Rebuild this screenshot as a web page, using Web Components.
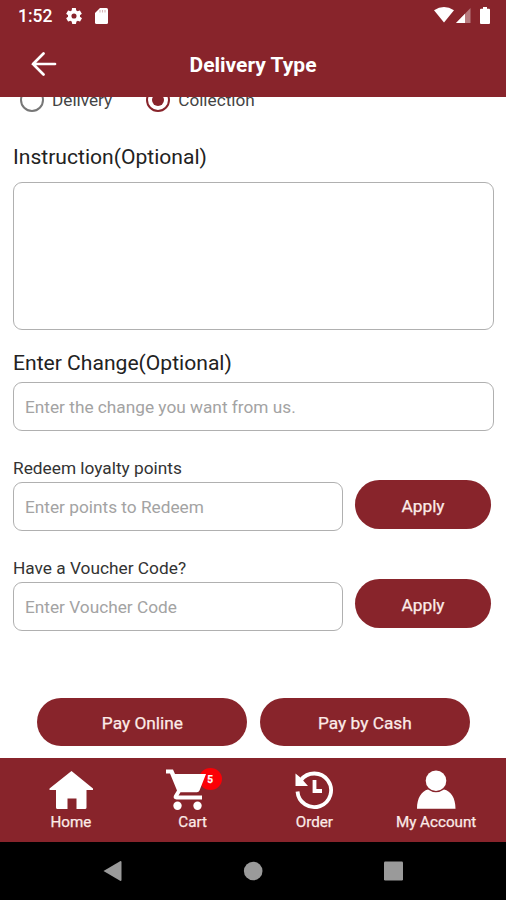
<!DOCTYPE html>
<html lang="en">
<head>
<meta charset="utf-8">
<title>Delivery Type</title>
<style>
html, body {
        margin: 0;
        padding: 0;
}

body {
        --brand: #88242b;
        --line: #b0b0b0;
        background: #fff;
        color: #222;
        font-family: Roboto, "Liberation Sans", sans-serif;
        overflow: hidden;
}
</style>
</head>
<body>
<delivery-screen></delivery-screen>

<script>
const makeTemplate = (html) => {
        const template = document.createElement('template')
        template.innerHTML = html
        return template
}

class BaseElement extends HTMLElement {
        constructor () {
                super()

                const shadowRoot = this.attachShadow({ mode: 'open' })
                shadowRoot.append(this.constructor.template.content.cloneNode(true))
        }
}

// Time, notification icons and signal icons
class StatusBar extends BaseElement {
        static template = makeTemplate(`
<style>
:host {
        align-items: center;
        box-sizing: border-box;
        color: #fff;
        display: flex;
        font-size: 17.5px;
        font-weight: 500;
        height: 32px;
        padding: 0 16px 0 18px;
}

svg {
        display: block;
        fill: #fff;
}

.StatusBar__time {
        line-height: 32px;
        width: 48px;
}

.StatusBar__sd {
        margin-left: 13px;
}

.StatusBar__wifi {
        margin-left: auto;
}

.StatusBar__battery {
        margin-left: 8px;
}

.StatusBar__wifi,
.StatusBar__signal,
.StatusBar__battery {
        margin-top: -2px;
}
</style>
<span class="StatusBar__time">1:52</span>
<svg width="16" height="16" viewBox="2.2 2 19.6 20"><path d="M19.4 13c0-.3.1-.6.1-1s0-.7-.1-1l2.1-1.600c.2-.1.3-.4.1-.6l-2-3.500c-.1-.2-.4-.3-.6-.2l-2.500 1c-.5-.4-1.100-.7-1.700-1l-.4-2.600c0-.3-.2-.5-.5-.5h-4c-.2 0-.4.2-.5.5L9.200 5.100c-.6.3-1.200.6-1.700 1L5 5.100c-.2-.1-.5 0-.6.2l-2 3.500c-.1.2-.1.5.1.6L4.600 11c0 .3-.1.6-.1 1s0 .7.1 1l-2.100 1.600c-.2.1-.2.4-.1.6l2 3.500c.1.2.4.3.6.2l2.500-1c.5.4 1.100.7 1.700 1l.4 2.600c0 .3.2.5.5.5h4c.2 0 .5-.2.5-.5l.4-2.600c.6-.3 1.200-.6 1.700-1l2.500 1c.2.1.5 0 .6-.2l2-3.500c.1-.2.1-.5-.1-.6zM12 15.200a3.200 3.200 0 1 1 0-6.400 3.200 3.200 0 0 1 0 6.400z"/></svg>
<svg class="StatusBar__sd" width="13" height="16" viewBox="0 0 13 16"><path d="M5 0h6.500Q13 0 13 1.500v13q0 1.500-1.500 1.500h-10Q0 16 0 14.500V5z"/><path d="M5 2v2.500M7.500 2v2.500M10 2v2.500" stroke="#88242b" stroke-opacity=".35" stroke-width="1.100"/></svg>
<svg class="StatusBar__wifi" width="20" height="16" viewBox="0 0 20 16"><path d="M0 3.200Q10-3.200 20 3.200L10 15.500z"/></svg>
<svg class="StatusBar__signal" width="18" height="16" viewBox="0 0 18 16"><path d="M2 16 16.500 1v15z" fill-opacity=".4"/><path d="M2 16 11 6.700V16z"/></svg>
<svg class="StatusBar__battery" width="10" height="17" viewBox="0 0 10 17"><path d="M3 0h4v1.800h2q1 0 1 1V16q0 1-1 1H1q-1 0-1-1V2.800q0-1 1-1h2z"/></svg>
`)
}

class AppHeader extends BaseElement {
        static template = makeTemplate(`
<style>
:host {
        background: var(--brand);
        color: #fff;
        display: block;
        height: 97px;
        position: relative;
        z-index: 1;
}

.AppHeader__bar {
        align-items: center;
        display: grid;
        grid-template-columns: 56px 1fr 56px;
        height: 65px;
        padding: 0 15px;
}

.AppHeader__back {
        display: block;
        margin-left: 15px;
}

.AppHeader__title {
        font-size: 21px;
        font-weight: 700;
        line-height: 66px;
        text-align: center;
}
</style>
<status-bar></status-bar>
<div class="AppHeader__bar">
        <svg class="AppHeader__back" width="28" height="26" viewBox="0 0 28 26"><path d="M25 12H3M13.500 1.500 3 12 13.500 22.500" fill="none" stroke="#fff" stroke-linecap="round" stroke-width="2.700"/></svg>
        <span class="AppHeader__title"><slot></slot></span>
</div>
`)
}

class RadioOption extends BaseElement {
        static template = makeTemplate(`
<style>
:host {
        align-items: center;
        color: #444;
        display: flex;
        font-size: 17.2px;
        gap: 8px;
        height: 24px;
        line-height: 24px;
}

.RadioOption__ring {
        border: 2px solid #777;
        border-radius: 50%;
        box-sizing: border-box;
        display: grid;
        height: 24px;
        place-items: center;
        width: 24px;
}

:host([checked]) .RadioOption__ring {
        border-color: var(--brand);
        border-width: 2.5px;
}

:host([checked]) .RadioOption__ring::after {
        background: var(--brand);
        border-radius: 50%;
        content: '';
        height: 12px;
        width: 12px;
}
</style>
<span class="RadioOption__ring"></span>
<span><slot></slot></span>
`)
}

class FormField extends BaseElement {
        static template = makeTemplate(`
<style>
:host {
        display: block;
}

.FormField__label {
        display: block;
        font-size: 21.1px;
        height: 24px;
        line-height: 24px;
        margin-bottom: var(--label-gap, 7px);
}

:host([compact]) .FormField__label {
        color: #333;
        font-size: 17.3px;
        margin-bottom: 2px;
}

.FormField__box {
        background: #fff;
        border: 1px solid var(--line);
        border-radius: 9px;
        box-sizing: border-box;
        color: #222;
        display: block;
        font: 17.25px/24px Roboto, "Liberation Sans", sans-serif;
        height: var(--box-height, 49px);
        outline: none;
        padding: 1px 11px 0;
        resize: none;
        width: 100%;
}

.FormField__box::placeholder {
        color: #a3a3a3;
        opacity: 1;
}
</style>
<label class="FormField__label" for="box"></label>
`)

        connectedCallback () {
                const box = document.createElement(this.hasAttribute('multiline') ? 'textarea' : 'input')

                box.id = 'box'
                box.className = 'FormField__box'
                box.placeholder = this.getAttribute('hint') || ''

                this.shadowRoot.querySelector('label').textContent = this.getAttribute('label')
                this.shadowRoot.append(box)
        }
}

class PillButton extends BaseElement {
        static template = makeTemplate(`
<style>
:host {
        display: block;
}

button {
        -webkit-text-stroke: .25px;
        background: var(--brand);
        border: 0;
        border-radius: 25px;
        color: #fcebe8;
        display: block;
        font: 400 17.3px/48px Roboto, "Liberation Sans", sans-serif;
        height: var(--pill-height, 48px);
        padding: var(--pill-padding, 1px) 0 0;
        width: 100%;
}
</style>
<button type="button"><slot></slot></button>
`)
}

// One entry of the bottom navigation
class TabItem extends BaseElement {
        static template = makeTemplate(`
<style>
:host {
        -webkit-text-stroke: .25px;
        align-items: center;
        color: #fcebe8;
        display: flex;
        flex: 1;
        flex-direction: column;
        font-size: 15.2px;
        line-height: 20px;
}

.TabItem__icon {
        height: 43px;
        margin: 10px 0 1px;
        position: relative;
}
</style>
<div class="TabItem__icon"><slot name="icon"></slot></div>
<span><slot></slot></span>
`)
}

class TabBar extends BaseElement {
        static template = makeTemplate(`
<style>
:host {
        background: var(--brand);
        box-sizing: border-box;
        display: flex;
        height: 84px;
        padding: 0 9px 0 10px;
}

svg {
        display: block;
        fill: #fff;
        height: 43px;
        width: 60px;
}

.TabBar__badge {
        background: #fb0006;
        border-radius: 50%;
        color: #fff;
        font-size: 10px;
        font-weight: 700;
        height: 22px;
        left: 36px;
        line-height: 23px;
        position: absolute;
        text-align: center;
        top: 0;
        width: 23px;
}

.TabBar__cart {
        position: relative;
}
</style>
<tab-item>
        <svg slot="icon" viewBox="0 0 60 43"><path d="M30.500 3 52 20.500V22h-6.500v17.500q0 1.500-1.500 1.500h-8.500V30.500h-9V41H16.500Q15 41 15 39.500V22H8.500v-1.500z"/></svg>
        Home
</tab-item>
<tab-item>
        <span slot="icon" class="TabBar__badge">5</span>
        <svg slot="icon" class="TabBar__cart" viewBox="0 0 60 43"><path d="M3 1.500h7L12 6H43L36.500 22.500q-.7 1.800-2.500 1.800H17.500L15.500 27.500H39V31.500H13.500Q9.500 31 11 27.500L14 22.500 7 5.500H3z"/><circle cx="14.500" cy="37.700" r="4.200"/><circle cx="34.500" cy="37.700" r="4.200"/></svg>
        Cart
</tab-item>
<tab-item>
        <svg slot="icon" viewBox="0 0 60 43"><path d="M17 12A16.800 16.800 0 1 1 13.500 23.500" fill="none" stroke="#fff" stroke-width="3.800"/><path d="M11.500 5.500V18H24L20 13.500 17 10z"/><path d="M30.500 12v11h7.500" fill="none" stroke="#fff" stroke-width="3.800"/></svg>
        Order
</tab-item>
<tab-item>
        <svg slot="icon" viewBox="0 0 60 43"><circle cx="30" cy="12.700" r="10.300"/><path d="M11 40.700C11 30 15.500 23 22 21.500Q30 27 38 21.500C45 23 49.500 30 49.500 40.700z"/></svg>
        My Account
</tab-item>
`)
}

// Android back / home / recents keys
class SystemKeys extends BaseElement {
        static template = makeTemplate(`
<style>
:host {
        align-items: center;
        background: #000;
        display: flex;
        height: 58px;
        justify-content: space-between;
        padding: 0 103px;
}

svg {
        display: block;
        fill: #9a9a9a;
        height: 20px;
        width: 20px;
}
</style>
<svg viewBox="0 0 20 20"><path d="M.5 10 17.500 0Q18.500 0 18.500 1v18q0 1-1 1z"/></svg>
<svg viewBox="0 0 20 20"><circle cx="10.200" cy="10" r="9.300"/></svg>
<svg viewBox="0 0 20 20"><rect x="1" y=".5" width="19" height="19" rx="1.200"/></svg>
`)
}

class DeliveryScreen extends BaseElement {
        static template = makeTemplate(`
<style>
:host {
        display: flex;
        flex-direction: column;
        height: 900px;
        overflow: hidden;
        width: 506px;
}

main {
        flex: 1;
        min-height: 0;
        overflow: hidden;
        padding: 0 12px 0 13px;
}

.Screen__types {
        display: flex;
        gap: 34px;
        margin: -9px 0 33px 7px;
}

.Screen__instruction {
        --label-gap: 13px;
        --box-height: 148px;
        margin-bottom: 21px;
}

.Screen__row {
        --pill-height: 49px;
        --pill-padding: 2px;
        display: grid;
        gap: 12px;
        grid-template-columns: 330px 136px;
        margin-top: 25px;
}

.Screen__row pill-button {
        margin-top: 24px;
}

.Screen__row + .Screen__row pill-button {
        margin-top: 23px;
}

.Screen__pay {
        display: grid;
        gap: 12.5px;
        grid-template-columns: 210px 210px;
        margin: 67px 0 0 24.4px;
}
</style>
<app-header>Delivery Type</app-header>
<main>
        <div class="Screen__types">
                <radio-option>Delivery</radio-option>
                <radio-option checked>Collection</radio-option>
        </div>
        <form-field class="Screen__instruction" label="Instruction(Optional)" multiline></form-field>
        <form-field label="Enter Change(Optional)" hint="Enter the change you want from us."></form-field>
        <div class="Screen__row">
                <form-field compact label="Redeem loyalty points" hint="Enter points to Redeem"></form-field>
                <pill-button>Apply</pill-button>
        </div>
        <div class="Screen__row">
                <form-field compact label="Have a Voucher Code?" hint="Enter Voucher Code"></form-field>
                <pill-button>Apply</pill-button>
        </div>
        <div class="Screen__pay">
                <pill-button>Pay Online</pill-button>
                <pill-button>Pay by Cash</pill-button>
        </div>
</main>
<tab-bar></tab-bar>
<system-keys></system-keys>
`)
}

window.customElements.define('status-bar', StatusBar)
window.customElements.define('app-header', AppHeader)
window.customElements.define('radio-option', RadioOption)
window.customElements.define('form-field', FormField)
window.customElements.define('pill-button', PillButton)
window.customElements.define('tab-item', TabItem)
window.customElements.define('tab-bar', TabBar)
window.customElements.define('system-keys', SystemKeys)
window.customElements.define('delivery-screen', DeliveryScreen)
</script>
</body>
</html>
